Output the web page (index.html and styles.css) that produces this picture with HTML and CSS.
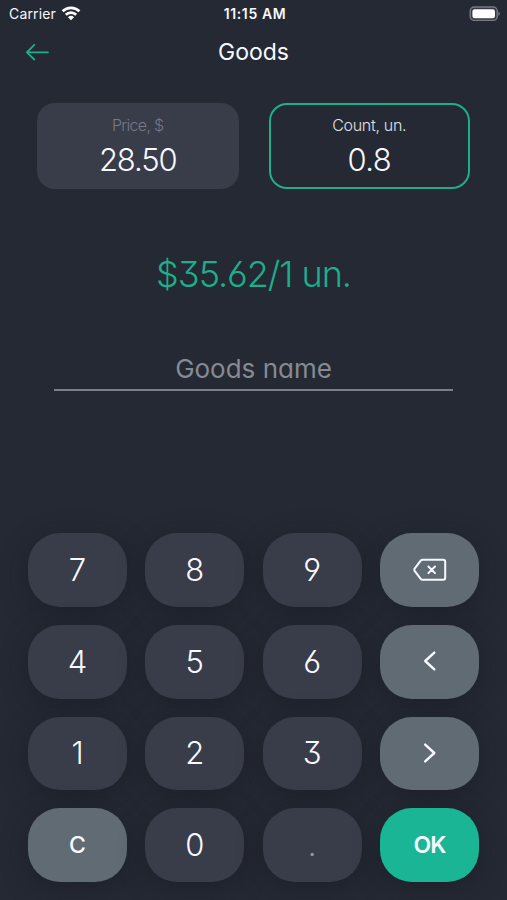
FILE: index.html
```html
<!DOCTYPE html>
<html lang="en">
<head>
    <meta charset="UTF-8">
    <meta name="viewport" content="width=device-width, initial-scale=1.0">
    <title>Goods</title>
    <link rel="stylesheet" href="styles.css">
</head>
<body>
    <div class="status-bar">
        <div class="carrier">
            <span>Carrier</span>
            <svg width="20" height="15" viewBox="0 0 20 15" fill="none" stroke="#fff" stroke-width="2.7">
                <path d="M1.6 5.3a12 12 0 0 1 16.8 0"/>
                <path d="M4.8 8.8a7.4 7.4 0 0 1 10.4 0"/>
                <path d="M10 14.3l-3-3.1a4.3 4.3 0 0 1 6 0z" fill="#fff" stroke="none"/>
            </svg>
        </div>
        <span class="time">11:15 AM</span>
        <svg class="battery" width="32" height="16" viewBox="0 0 32 16">
            <rect x="1.2" y="1" width="27" height="13.4" rx="4" fill="#353941" stroke="#777a80" stroke-width="1.4"/>
            <rect x="3.4" y="3.2" width="22.6" height="9" rx="2.2" fill="#fff"/>
            <path d="M29.4 5.5q3 2.2 0 4.4z" fill="#777a80"/>
        </svg>
    </div>

    <header class="header">
        <svg class="back" width="24" height="18" viewBox="0 0 24 18">
            <path d="M22 9.3H1.2M8.3 1.8L.9 9.3L8.3 16.5"/>
        </svg>
        <h1>Goods</h1>
    </header>

    <div class="fields">
        <div class="field">
            <span class="label">Price, $</span>
            <span class="value">28.50</span>
        </div>
        <div class="field active">
            <span class="label">Count, un.</span>
            <span class="value">0.8</span>
        </div>
    </div>

    <div class="result">$35.62/1 un.</div>
    <div class="name">Goods name</div>

    <div class="keypad">
        <button>7</button>
        <button>8</button>
        <button>9</button>
        <button class="control">
            <svg width="34" height="24" viewBox="0 0 34 24">
                <path d="M9.5 1.8H30.2Q32.2 1.8 32.2 3.8V19.8Q32.2 21.8 30.2 21.8H9.5Q8.4 21.8 7.7 20.9L1.8 13.2Q.8 11.8 1.8 10.4L7.7 2.7Q8.4 1.8 9.5 1.8Z"/>
                <path d="M15.4 8.5l6.6 6.6M22 8.5l-6.6 6.6"/>
            </svg>
        </button>

        <button>4</button>
        <button>5</button>
        <button>6</button>
        <button class="control">
            <svg class="chevron" width="14" height="22" viewBox="0 0 14 22"><path d="M11.3 2.6L2.2 11L11.3 19.4"/></svg>
        </button>

        <button>1</button>
        <button>2</button>
        <button>3</button>
        <button class="control">
            <svg class="chevron" width="14" height="22" viewBox="0 0 14 22"><path d="M2.2 2.6L11.3 11L2.2 19.4"/></svg>
        </button>

        <button class="control">C</button>
        <button>0</button>
        <button class="disabled">.</button>
        <button class="ok">OK</button>
    </div>
</body>
</html>
```

FILE: styles.css
```css
* {
    box-sizing: border-box;
}

body {
    margin: 0;
    height: 900px;
    overflow: hidden;
    display: flex;
    flex-direction: column;
    background-color: #242933;
    color: #f8f8ff;
    font-family: Inter, "Liberation Sans", sans-serif;
    font-weight: 300;
    font-feature-settings: "cv03", "cv04", "cv09", "cv11";
}

svg {
    display: block;
}

.status-bar {
    display: grid;
    grid-template-columns: 1fr auto 1fr;
    align-items: center;
    height: 27px;
    padding: 0 6px 0 9px;
    font-size: 14px;
    font-weight: 400;
    font-feature-settings: normal;
}

.carrier {
    display: flex;
    align-items: center;
    gap: 5px;
    letter-spacing: 0.15px;
}

.time {
    font-weight: 600;
    letter-spacing: 0.6px;
}

.battery {
    justify-self: end;
}

.header {
    display: grid;
    grid-template-columns: 24px 1fr 24px;
    align-items: center;
    height: 50px;
    padding: 0 26px;
}

.back {
    fill: none;
    stroke: #1eae8c;
    stroke-width: 1.8;
    stroke-linecap: round;
    stroke-linejoin: round;
}

h1 {
    margin: 0;
    font-size: 23px;
    font-weight: 400;
    text-align: center;
}

.fields {
    display: grid;
    grid-template-columns: 1fr 1fr;
    gap: 30px;
    padding: 0 37px;
    margin-top: 26px;
}

.field {
    display: flex;
    flex-direction: column;
    align-items: center;
    height: 86px;
    padding-top: 12px;
    border-radius: 18px;
    background-color: #393c49;
}

.field.active {
    padding-top: 10px;
    border: 2px solid #1eae8c;
    background: none;
}

.label {
    font-size: 16px;
    line-height: 20px;
    letter-spacing: -0.7px;
    color: #777985;
}

.active .label {
    letter-spacing: -0.3px;
    color: #e0e1e8;
}

.value {
    font-size: 31px;
    line-height: 50px;
    letter-spacing: -1.1px;
}

.active .value {
    letter-spacing: -0.6px;
}

.result {
    margin-top: 60px;
    font-size: 36px;
    line-height: 50px;
    letter-spacing: -1.05px;
    text-align: center;
    color: #1eae8c;
}

.name {
    margin: 46px 54px 0;
    height: 46px;
    border-bottom: 2px solid #7b7f87;
    font-size: 26px;
    font-weight: 400;
    line-height: 48px;
    text-align: center;
    color: #858a93;
}

.keypad {
    display: grid;
    grid-template-columns: repeat(4, 1fr);
    grid-auto-rows: 73.6px;
    gap: 18.1px 18.4px;
    margin-top: 142.3px;
    padding: 0 28px;
}

button {
    display: flex;
    align-items: center;
    justify-content: center;
    padding: 0 0 1px;
    border: none;
    border-radius: 32px;
    background-color: #393c49;
    box-shadow: 0 6px 24px rgba(24, 25, 36, 0.5);
    color: #f8f8ff;
    font: inherit;
    font-feature-settings: inherit;
    font-size: 31px;
}

button svg {
    fill: none;
    stroke: #f8f8ff;
    stroke-width: 2;
    stroke-linecap: round;
    stroke-linejoin: round;
}

button .chevron {
    stroke-width: 2.4;
}

button.control {
    background-color: #616b73;
    font-size: 23px;
    font-weight: 500;
}

button.ok {
    background-color: #19b594;
    font-size: 23px;
    font-weight: 600;
    letter-spacing: -0.8px;
}

button.disabled {
    color: #9294a0;
}
```
